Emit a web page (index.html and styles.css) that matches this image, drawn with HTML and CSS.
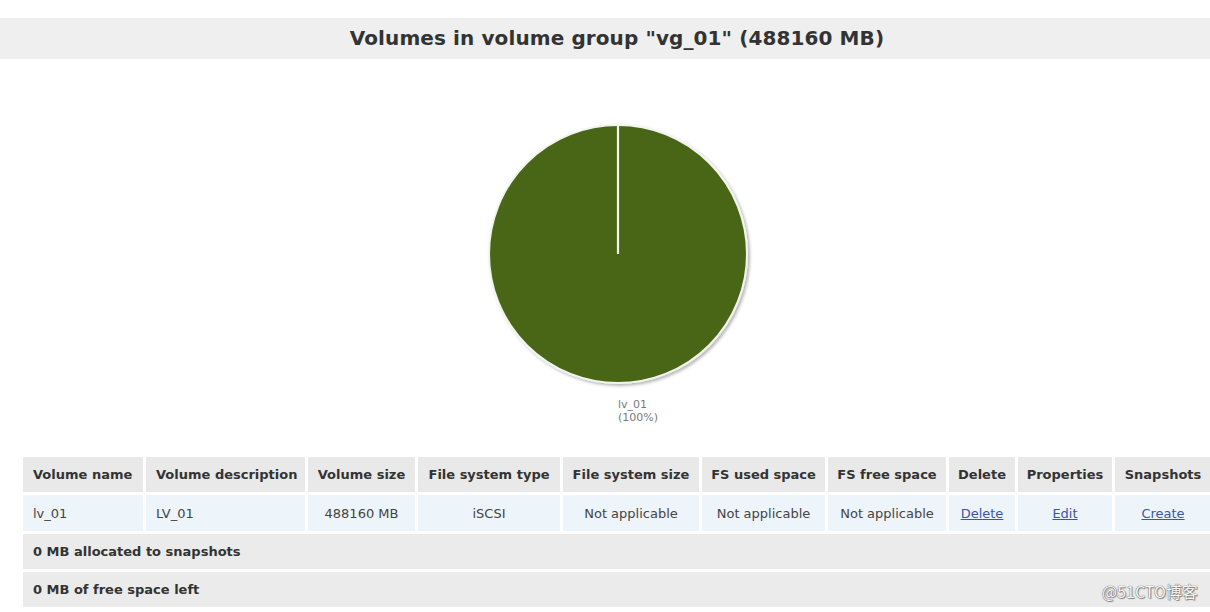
FILE: index.html
```html
<!DOCTYPE html>
<html lang="en">
<head>
<meta charset="utf-8">
<title>Volumes in volume group</title>
<link rel="stylesheet" href="styles.css">
</head>
<body>
<div class="page">
  <h1 class="title">Volumes in volume group "vg_01" (488160 MB)</h1>
  <div class="chart">
    <svg class="pie" width="270" height="270" viewBox="0 0 270 270">
      <defs>
        <filter id="sh" x="-10%" y="-10%" width="130%" height="130%">
          <feDropShadow dx="2" dy="2" stdDeviation="1.6" flood-color="#000" flood-opacity="0.28"/>
        </filter>
      </defs>
      <circle cx="135" cy="135" r="129" fill="#4a6619" stroke="#f2f4ee" stroke-width="2" filter="url(#sh)"/>
      <line x1="135" y1="135" x2="135" y2="6" stroke="#f4f6f0" stroke-width="2.2"/>
    </svg>
    <div class="legend"><span>lv_01</span><span>(100%)</span></div>
  </div>
  <table class="vols">
    <colgroup>
      <col class="c1"><col class="c2"><col class="c3"><col class="c4"><col class="c5">
      <col class="c6"><col class="c7"><col class="c8"><col class="c9"><col class="c10">
    </colgroup>
    <thead>
      <tr>
        <th>Volume name</th>
        <th>Volume description</th>
        <th>Volume size</th>
        <th>File system type</th>
        <th>File system size</th>
        <th>FS used space</th>
        <th>FS free space</th>
        <th>Delete</th>
        <th>Properties</th>
        <th>Snapshots</th>
      </tr>
    </thead>
    <tbody>
      <tr class="data">
        <td class="left">lv_01</td>
        <td class="left">LV_01</td>
        <td>488160 MB</td>
        <td>iSCSI</td>
        <td>Not applicable</td>
        <td>Not applicable</td>
        <td>Not applicable</td>
        <td><a href="#">Delete</a></td>
        <td><a href="#">Edit</a></td>
        <td><a href="#">Create</a></td>
      </tr>
      <tr class="sum"><td colspan="10">0 MB allocated to snapshots</td></tr>
      <tr class="sum"><td colspan="10">0 MB of free space left</td></tr>
    </tbody>
  </table>
  <div class="watermark">@51CTO博客</div>
</div>
</body>
</html>
```
FILE: styles.css
```css
html, body {
  margin: 0;
  padding: 0;
  overflow: hidden;
  background: #ffffff;
}
body {
  font-family: "DejaVu Sans", Verdana, sans-serif;
  color: #333333;
}
.page {
  position: relative;
  width: 1234px;
  height: 612px;
  padding-top: 18px;
  box-sizing: border-box;
}
.title {
  margin: 0;
  height: 41px;
  line-height: 40px;
  background: #efefef;
  text-align: center;
  font-size: 20px;
  font-weight: bold;
  letter-spacing: 0.1px;
  color: #333333;
}
.chart {
  display: flex;
  flex-direction: column;
  align-items: center;
  padding-top: 60px;
  padding-left: 2px;
}
.pie {
  display: block;
}
.legend {
  width: 0;
  margin-top: 9px;
  white-space: nowrap;
  display: flex;
  flex-direction: column;
  font-size: 11px;
  line-height: 13px;
  color: #7a7a7a;
}
.vols {
  margin: 30px 0 0 20px;
  width: 1194px;
  table-layout: fixed;
  border-collapse: separate;
  border-spacing: 3px;
  font-size: 13px;
}
.c1 { width: 120px; }
.c2 { width: 159px; }
.c3 { width: 107px; }
.c4 { width: 142px; }
.c5 { width: 136px; }
.c6 { width: 123px; }
.c7 { width: 118px; }
.c8 { width: 66px; }
.c9 { width: 94px; }
.c10 { width: 96px; }
.vols th {
  background: #e9e9e9;
  height: 35px;
  padding: 0 4px;
  text-align: center;
  font-weight: bold;
  color: #333333;
  white-space: nowrap;
}
.vols th:first-child,
.vols th:nth-child(2) {
  text-align: left;
  padding-left: 10px;
}
.data td {
  background: #edf4fa;
  height: 36px;
  padding: 0 4px;
  text-align: center;
  color: #444444;
  white-space: nowrap;
}
.data td.left {
  text-align: left;
  padding-left: 10px;
}
.data a {
  color: #3a55a8;
  text-decoration: underline;
}
.sum td {
  background: #ebebeb;
  height: 35px;
  padding: 0 10px;
  font-weight: bold;
  color: #333333;
}
.watermark {
  position: absolute;
  left: 1102px;
  top: 581px;
  font-family: "Noto Sans CJK SC", sans-serif;
  font-size: 16px;
  line-height: 20px;
  color: #f7f7f7;
  text-shadow: 0 0 1px #666, 0 0 1px #666, 1px 1px 1px #888;
}
```
